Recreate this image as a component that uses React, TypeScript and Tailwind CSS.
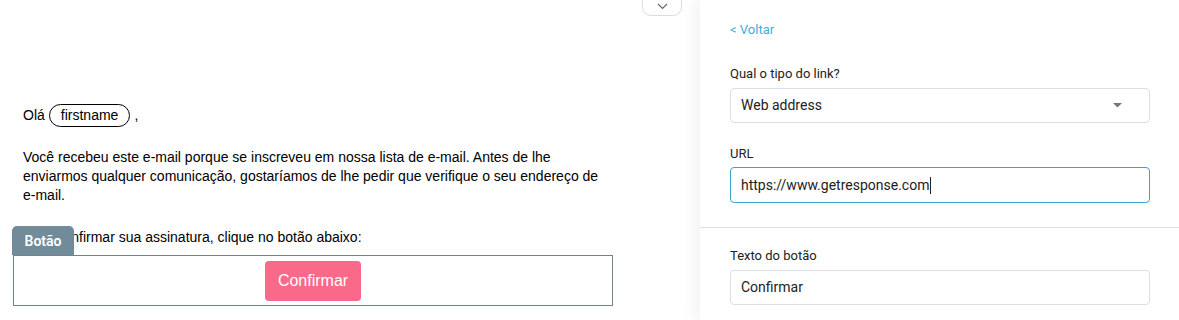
import React from "react";

const EmailPreview: React.FC = () => {
  return (
    <div className="relative w-[700px] h-[320px] bg-white overflow-hidden font-['Liberation_Sans',Arial,sans-serif] text-[14px] text-black">
      {/* collapse tab */}
      <div className="absolute left-[642px] top-[-10px] w-[40px] h-[26px] border border-[#dcdcdc] rounded-b-[9px] bg-white flex items-end justify-center pb-[5px]">
        <svg width="11" height="7" viewBox="0 0 11 7" fill="none">
          <path d="M1 1l4.5 4.5L10 1" stroke="#666" strokeWidth="1.2" />
        </svg>
      </div>

      <div className="w-[600px] ml-[13px] pt-[104px]">
        <div className="px-[10px] flex items-center h-[23px] leading-[19px]">
          <span>Olá</span>
          <span className="ml-[4px] border border-black rounded-full h-[23px] px-[11px] flex items-center">
            firstname
          </span>
          <span className="ml-[4px]">,</span>
        </div>

        <p className="px-[10px] mt-[21px] leading-[19px]">
          Você recebeu este e-mail porque se inscreveu em nossa lista de e-mail. Antes de lhe enviarmos qualquer
          comunicação, gostaríamos de lhe pedir que verifique o seu endereço de e-mail.
        </p>

        <div className="relative mt-[23px]">
          <p className="px-[10px] leading-[19px]">Para confirmar sua assinatura, clique no botão abaixo:</p>
          <div className="absolute left-[-1px] top-[-2px] w-[62px] h-[29px] bg-[#728b9a] rounded-t-[5px] text-white text-[14px] font-semibold font-['Roboto',sans-serif] flex items-center justify-center pt-[2px]">
            Botão
          </div>
        </div>

        <div className="mt-[8px] h-[51px] border border-[#74828b] flex items-center justify-center">
          <div className="w-[96px] h-[40px] bg-[#f8698a] rounded-[4px] text-white text-[16px] flex items-center justify-center">
            Confirmar
          </div>
        </div>
      </div>
    </div>
  );
};

const Field: React.FC<{ label: string; value: string; focused?: boolean; select?: boolean }> = ({
  label,
  value,
  focused,
  select,
}) => (
  <div>
    <div className="text-[13px] leading-[18px] text-[#222]">{label}</div>
    <div
      className={
        focused
          ? "mt-[4px] h-[36px] rounded-[4px] border border-[#3aa5c9] flex items-center px-[10px] text-[14px] text-[#222]"
          : "mt-[5px] h-[35px] rounded-[4px] border border-[#dedede] flex items-center px-[10px] text-[14px] text-[#222]"
      }
    >
      <span>{value}</span>
      {focused && <span className="ml-[1px] w-px h-[17px] bg-[#222]" />}
      {select && (
        <svg className="ml-auto mr-[17px]" width="9" height="5" viewBox="0 0 9 5">
          <path d="M0 0h9L4.5 4.5z" fill="#777" />
        </svg>
      )}
    </div>
  </div>
);

const Sidebar: React.FC = () => {
  return (
    <div className="flex-1 h-[320px] bg-white shadow-[-6px_0_14px_rgba(0,0,0,0.05)] relative font-['Roboto',sans-serif]">
      <div className="pl-[30px] pr-[29px] pt-[21px] pb-[24px]">
        <div className="text-[13px] leading-[18px] text-[#3cb0d8]">&lt; Voltar</div>
        <div className="mt-[26px]">
          <Field label="Qual o tipo do link?" value="Web address" select />
        </div>
        <div className="mt-[22px]">
          <Field label="URL" value="https://www.getresponse.com" focused />
        </div>
      </div>
      <div className="h-px bg-[#dedede]" />
      <div className="pl-[30px] pr-[29px] pt-[19px]">
        <Field label="Texto do botão" value="Confirmar" />
      </div>
    </div>
  );
};

export default function App() {
  return (
    <div className="w-[1179px] h-[320px] flex bg-white overflow-hidden">
      <EmailPreview />
      <Sidebar />
    </div>
  );
}
